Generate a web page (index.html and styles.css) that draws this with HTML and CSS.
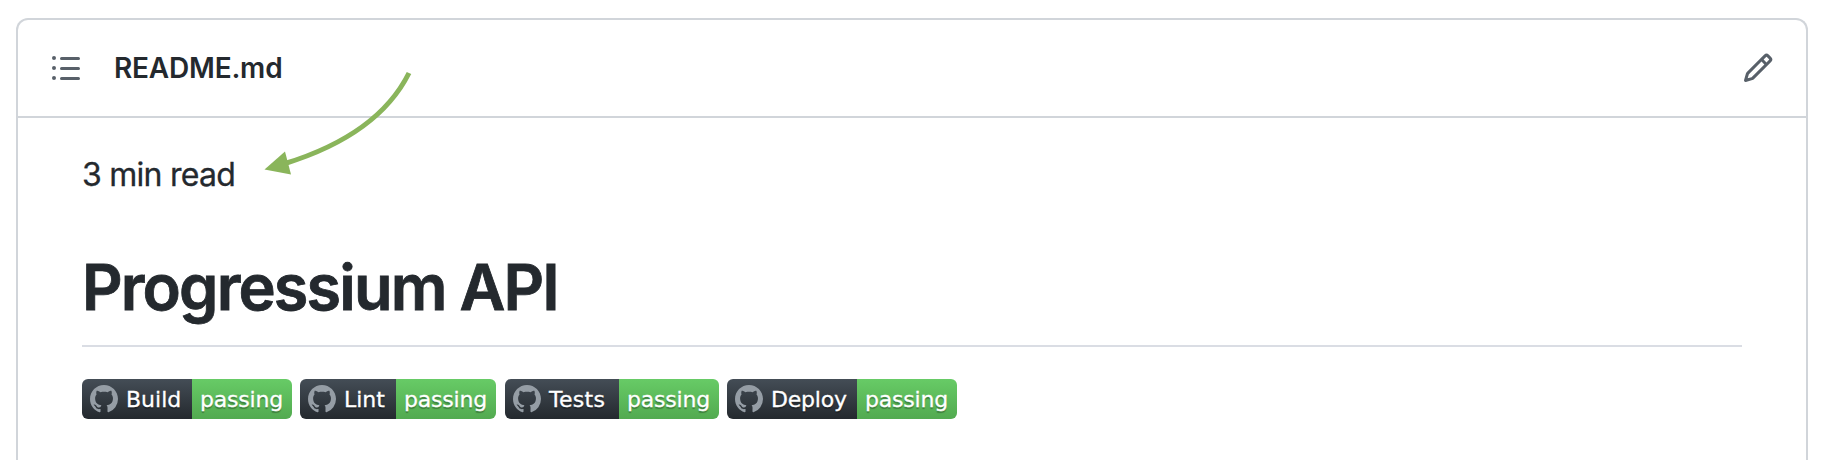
FILE: index.html
```
<!DOCTYPE html>
<html lang="en">
<head>
<meta charset="utf-8">
<title>README.md</title>
<link rel="stylesheet" href="styles.css">
</head>
<body>
<svg class="defs" width="0" height="0" aria-hidden="true">
  <symbol id="mark" viewBox="0 0 16 16"><path fill-rule="evenodd" d="M8 0C3.58 0 0 3.58 0 8c0 3.54 2.29 6.53 5.47 7.59.4.07.55-.17.55-.38 0-.19-.01-.82-.01-1.49-2.01.37-2.53-.49-2.69-.94-.09-.23-.48-.94-.82-1.13-.28-.15-.68-.52-.01-.53.63-.01 1.08.58 1.23.82.72 1.21 1.87.87 2.33.66.07-.52.28-.87.51-1.07-1.78-.2-3.64-.89-3.64-3.95 0-.87.31-1.59.82-2.15-.08-.2-.36-1.02.08-2.12 0 0 .67-.21 2.2.82.64-.18 1.32-.27 2-.27.68 0 1.36.09 2 .27 1.53-1.04 2.2-.82 2.2-.82.44 1.1.16 1.92.08 2.12.51.56.82 1.27.82 2.15 0 3.07-1.87 3.75-3.65 3.95.29.25.54.73.54 1.48 0 1.07-.01 1.93-.01 2.2 0 .21.15.46.55.38A8.013 8.013 0 0 0 16 8c0-4.42-3.58-8-8-8z"/></symbol>
</svg>
<article class="card">
  <header class="bar">
    <svg class="icon" viewBox="0 0 16 16"><path fill-rule="evenodd" d="M2 4a1 1 0 100-2 1 1 0 000 2zm3.75-1.5a.75.75 0 000 1.5h8.5a.75.75 0 000-1.5h-8.5zm0 5a.75.75 0 000 1.5h8.5a.75.75 0 000-1.5h-8.5zm0 5a.75.75 0 000 1.5h8.5a.75.75 0 000-1.5h-8.5zM3 8a1 1 0 11-2 0 1 1 0 012 0zm-1 6a1 1 0 100-2 1 1 0 000 2z"/></svg>
    <span class="filename">README.md</span>
    <svg class="icon edit" viewBox="0 0 16 16"><path fill-rule="evenodd" d="M11.013 1.427a1.75 1.75 0 012.474 0l1.086 1.086a1.75 1.75 0 010 2.474l-8.61 8.61c-.21.21-.47.364-.756.445l-3.251.93a.75.75 0 01-.927-.928l.929-3.25a1.75 1.75 0 01.445-.758l8.61-8.61zm1.414 1.06a.25.25 0 00-.354 0L10.811 3.75l1.439 1.44 1.263-1.263a.25.25 0 000-.354l-1.086-1.086zM11.189 6.25L9.75 4.81l-6.286 6.287a.25.25 0 00-.064.108l-.558 1.953 1.953-.558a.249.249 0 00.108-.064l6.286-6.286z"/></svg>
  </header>
  <div class="body">
    <p class="time">3 min read</p>
    <h1 class="title">Progressium API</h1>
    <div class="badges">
      <div class="badge build"><span class="label"><svg class="mark"><use href="#mark"/></svg><span class="name">Build</span></span><span class="status">passing</span></div>
      <div class="badge lint"><span class="label"><svg class="mark"><use href="#mark"/></svg><span class="name">Lint</span></span><span class="status">passing</span></div>
      <div class="badge tests"><span class="label"><svg class="mark"><use href="#mark"/></svg><span class="name">Tests</span></span><span class="status">passing</span></div>
      <div class="badge deploy"><span class="label"><svg class="mark"><use href="#mark"/></svg><span class="name">Deploy</span></span><span class="status">passing</span></div>
    </div>
  </div>
</article>
<svg class="arrow" viewBox="0 0 160 120"><path class="shaft" d="M149 13C129 53 88 84 25 103.500"/><path class="head" d="M4.500 109.500L25 91.500L31 114.500Z"/></svg>
</body>
</html>
```
FILE: styles.css
```
* { box-sizing: border-box; }
body {
  margin: 0;
  padding: 18px 18px 0 16px;
  height: 460px;
  position: relative;
  background: #fff;
  color: #24292e;
  font-family: Inter, "Liberation Sans", sans-serif;
}
.defs { display: none; }
.card {
  height: 442px;
  border: 2px solid #d1d5da;
  border-bottom: 0;
  border-radius: 12px 12px 0 0;
}
.bar {
  display: flex;
  align-items: center;
  height: 98px;
  padding: 0 32px 0 32px;
  border-bottom: 2px solid #d1d5da;
}
.icon { width: 32px; height: 32px; fill: #586069; }
.edit { margin-left: auto; }
.filename {
  margin-left: 32px;
  font-size: 28px;
  font-weight: 600;
  line-height: 42px;
  letter-spacing: -0.2px;
}
.body { padding: 33px 64px 0; }
.time {
  margin: 0;
  font-size: 32px;
  line-height: 48px;
  letter-spacing: -0.75px;
  -webkit-text-stroke: 0.3px #24292e;
}
.title {
  margin: 48px 0 32px;
  height: 100px;
  font-size: 63px;
  font-weight: 600;
  line-height: 81px;
  letter-spacing: -1.85px;
  -webkit-text-stroke: 0.8px #24292e;
  border-bottom: 2px solid #dadde4;
}
.badges { display: flex; gap: 8px; }
.badge {
  display: flex;
  height: 40px;
  border-radius: 6px;
  overflow: hidden;
  color: #fff;
  font-family: "DejaVu Sans", sans-serif;
  font-size: 22px;
  line-height: 41px;
  text-shadow: 0 2px 1px rgba(0, 0, 0, 0.3);
  -webkit-text-stroke: 0.3px #fff;
  white-space: nowrap;
}
.label {
  display: flex;
  flex: 1;
  align-items: center;
  padding-left: 8px;
  background: linear-gradient(#444d56, #24292e);
}
.mark { width: 28px; height: 28px; fill: #959da5; }
.name { margin-left: 8px; }
.status {
  width: 100px;
  padding-left: 8px;
  letter-spacing: -0.2px;
  background: linear-gradient(#67cb66, #52aa50);
}
.build { width: 210px; }
.lint { width: 196px; }
.tests { width: 214px; margin-left: 1px; }
.tests .name { letter-spacing: 0.3px; }
.deploy { width: 230px; }
.deploy .name { letter-spacing: -0.2px; }
.arrow {
  position: absolute;
  left: 260px;
  top: 60px;
  width: 160px;
  height: 120px;
}
.shaft { fill: none; stroke: #8ab55b; stroke-width: 5; }
.head { fill: #8ab55b; }
```
